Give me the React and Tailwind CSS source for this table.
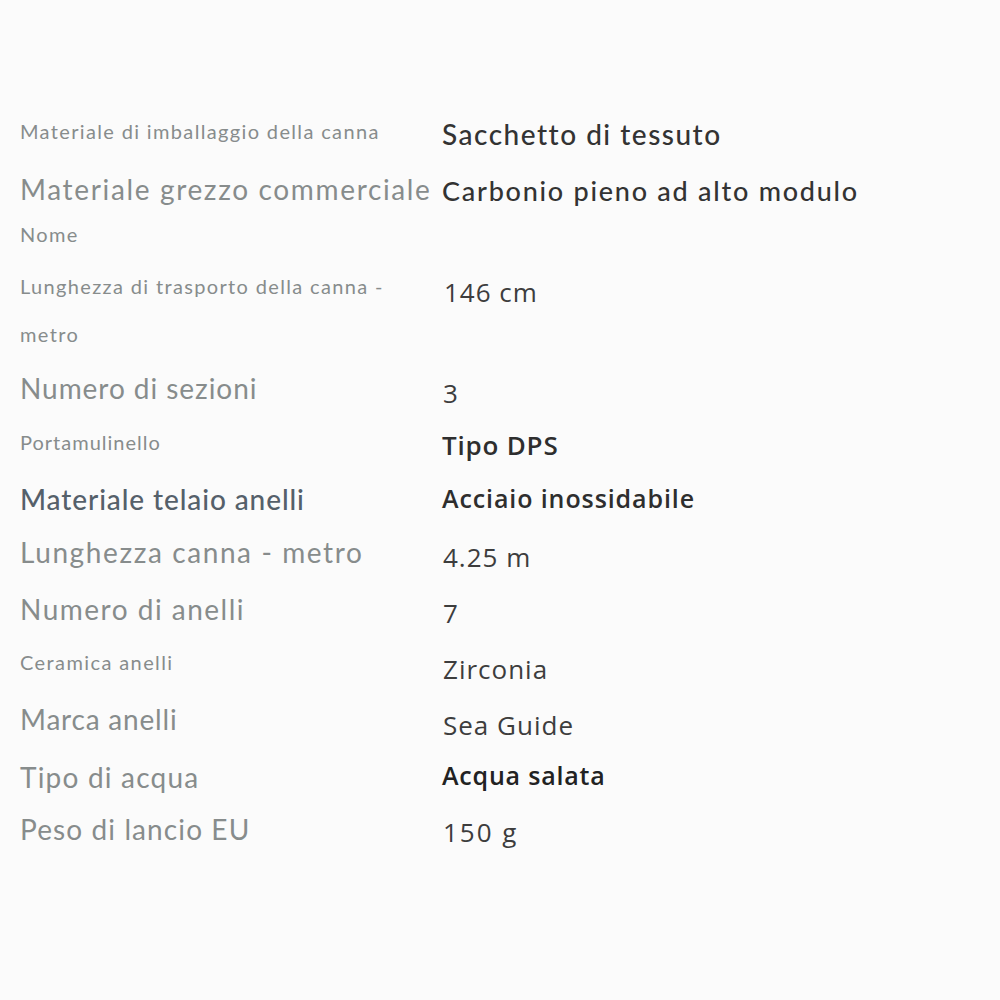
import React from "react";

const LATO = "font-['Lato',sans-serif]";
const OPEN = "font-['Open_Sans',sans-serif]";
const SEG = `${OPEN} text-[26px] leading-none text-[#3d3d3d] tracking-[1px]`;

const rows = [
  { h: "h-[60px]", label: "Materiale di imballaggio della canna", lc: "text-[20px] leading-none pt-[11px] tracking-[1.35px]", value: "Sacchetto di tessuto", vc: `${LATO} text-[28px] leading-none pt-[10px] font-medium text-[#333333] tracking-[1.5px]` },
  { h: "h-[50px]", label: "Materiale grezzo commerciale", lc: "text-[28px] leading-none pt-[5px] tracking-[1.65px]", value: "Carbonio pieno ad alto modulo", vc: `${LATO} text-[27px] leading-none pt-[7px] font-medium text-[#333333] tracking-[1.75px]` },
  { h: "h-[40px]", label: "Nome", lc: "text-[20px] leading-none pt-[4px] tracking-[1.3px]", value: "", vc: "" },
  { h: "h-[110px]", label: "Lunghezza di trasporto della canna - metro", lc: "text-[20px] leading-[48px] pt-[2px] w-[400px] tracking-[1.35px]", value: "146 cm", vc: `${SEG} pt-[19px] pl-[2px]` },
  { h: "h-[55px]", label: "Numero di sezioni", lc: "text-[28px] leading-none pt-[4px] tracking-[0.95px]", value: "3", vc: `${SEG} pt-[10px] pl-[1px]` },
  { h: "h-[55px]", label: "Portamulinello", lc: "text-[20px] leading-none pt-[7px] tracking-[1px]", value: "Tipo DPS", vc: `${OPEN} text-[26px] leading-none pt-[7px] font-semibold text-[#2e2e2e] tracking-[0.8px]` },
  { h: "h-[55px]", label: "Materiale telaio anelli", lc: "text-[28px] leading-none pt-[5px] tracking-[0.9px] !text-[#55606a] font-medium", value: "Acciaio inossidabile", vc: `${OPEN} text-[25px] leading-none pt-[6px] font-semibold text-[#2e2e2e] tracking-[0.9px]` },
  { h: "h-[55px]", label: "Lunghezza canna - metro", lc: "text-[28px] leading-none pt-[3px] tracking-[1.6px]", value: "4.25 m", vc: `${SEG} pt-[9px] pl-[1px] tracking-[1.6px]` },
  { h: "h-[55px]", label: "Numero di anelli", lc: "text-[28px] leading-none pt-[5px] tracking-[1.5px]", value: "7", vc: `${SEG} pt-[10px] pl-[1px]` },
  { h: "h-[55px]", label: "Ceramica anelli", lc: "text-[20px] leading-none pt-[7px] tracking-[1.4px]", value: "Zirconia", vc: `${SEG} pt-[11px] pl-[1px] tracking-[1.5px]` },
  { h: "h-[60px]", label: "Marca anelli", lc: "text-[28px] leading-none pt-[5px] tracking-[0.8px]", value: "Sea Guide", vc: `${SEG} pt-[12px] pl-[1px] tracking-[1.8px]` },
  { h: "h-[50px]", label: "Tipo di acqua", lc: "text-[28px] leading-none pt-[3px] tracking-[1.2px]", value: "Acqua salata", vc: `${OPEN} text-[25px] leading-none pt-[3px] font-semibold text-[#222222] tracking-[0.8px]` },
  { h: "h-[60px]", label: "Peso di lancio EU", lc: "text-[28px] leading-none pt-[5px] tracking-[1.1px]", value: "150 g", vc: `${SEG} pt-[9px] pl-[1px] tracking-[2px]` },
];

export default function App() {
  return (
    <div className="w-[1000px] h-[1000px] bg-[#fbfbfb] pt-[110px] pl-[20px] overflow-hidden">
      {rows.map((r, i) => (
        <div key={i} className={`flex items-start ${r.h}`}>
          <div className="w-[422px] shrink-0">
            <div className={`${LATO} text-[#878c8c] ${r.lc}`}>{r.label}</div>
          </div>
          <div className={`whitespace-nowrap ${r.vc}`}>{r.value}</div>
        </div>
      ))}
    </div>
  );
}
